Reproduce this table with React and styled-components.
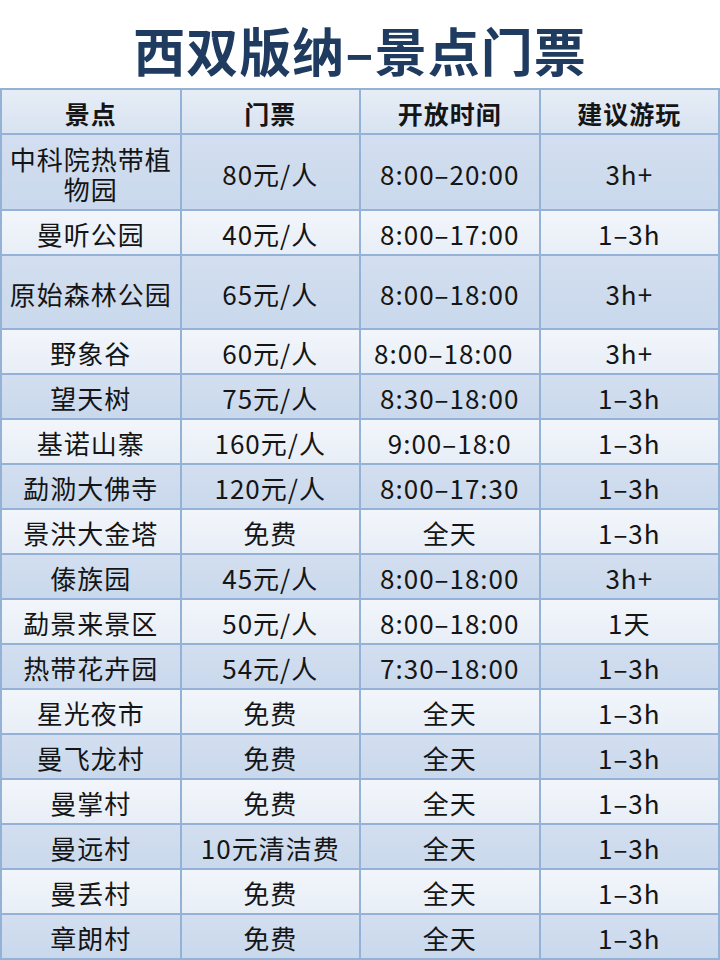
import React from 'react';
import styled, {createGlobalStyle} from 'styled-components';

const GlobalStyle = createGlobalStyle`
  html, body {
    margin: 0;
    padding: 0;
    background: #ffffff;
  }
  body {
    font-family: "Noto Sans CJK SC", "Noto Sans", sans-serif;
    color: #1a1a1a;
  }
`;

const Page = styled.div`
  width: 720px;
  height: 960px;
  overflow: hidden;
  display: flex;
  flex-direction: column;
`;

const Title = styled.h1`
  margin: 0;
  height: 90px;
  box-sizing: border-box;
  display: flex;
  align-items: center;
  justify-content: center;
  padding: 10px 0 0 0;
  font-size: 52px;
  font-weight: 700;
  color: #1f3b60;
  letter-spacing: 1px;
`;

const Table = styled.div`
  display: grid;
  grid-template-columns: repeat(4, 1fr);
  border-top: 2px solid #93b2d6;
  border-left: 2px solid #93b2d6;
`;

const Cell = styled.div`
  height: ${p => p.$h}px;
  box-sizing: border-box;
  display: flex;
  align-items: center;
  justify-content: center;
  text-align: center;
  padding: 4px 6px 0;
  border-right: 2px solid #93b2d6;
  border-bottom: 2px solid #93b2d6;
  background: ${p =>
    p.$head
      ? 'linear-gradient(180deg, #e6edf6 0%, #d8e3f1 100%)'
      : p.$dark
      ? 'linear-gradient(180deg, #d3dff0 0%, #c9d8ec 100%)'
      : 'linear-gradient(180deg, #f2f6fb 0%, #e8eef7 100%)'};
  font-size: ${p => (p.$head ? 25 : 26)}px;
  font-weight: ${p => (p.$head ? 700 : 400)};
  letter-spacing: 1px;
  line-height: 1.17;
  color: #151515;
  span {
    transform: translateX(${p => p.$shift || 0}px);
  }
`;

const headers = ['景点', '门票', '开放时间', '建议游玩'];

const rows = [
  ['中科院热带植物园', '80元/人', '8:00–20:00', '3h+', 76],
  ['曼听公园', '40元/人', '8:00–17:00', '1–3h', 45],
  ['原始森林公园', '65元/人', '8:00–18:00', '3h+', 74],
  ['野象谷', '60元/人', '8:00–18:00', '3h+', 45, -6],
  ['望天树', '75元/人', '8:30–18:00', '1–3h', 45],
  ['基诺山寨', '160元/人', '9:00–18:0', '1–3h', 45],
  ['勐泐大佛寺', '120元/人', '8:00–17:30', '1–3h', 45],
  ['景洪大金塔', '免费', '全天', '1–3h', 45],
  ['傣族园', '45元/人', '8:00–18:00', '3h+', 45],
  ['勐景来景区', '50元/人', '8:00–18:00', '1天', 45],
  ['热带花卉园', '54元/人', '7:30–18:00', '1–3h', 45],
  ['星光夜市', '免费', '全天', '1–3h', 45],
  ['曼飞龙村', '免费', '全天', '1–3h', 45],
  ['曼掌村', '免费', '全天', '1–3h', 45],
  ['曼远村', '10元清洁费', '全天', '1–3h', 45],
  ['曼丢村', '免费', '全天', '1–3h', 45],
  ['章朗村', '免费', '全天', '1–3h', 45],
];

const App = () => (
  <Page>
    <GlobalStyle/>
    <Title>西双版纳–景点门票</Title>
    <Table>
      {headers.map(h => (
        <Cell key={h} $head $h={45}><span>{h}</span></Cell>
      ))}
      {rows.map((r, i) => {
        const [name, price, time, dur, h, shift] = r;
        const dark = i % 2 === 0;
        return (
          <React.Fragment key={name}>
            <Cell $h={h} $dark={dark}><span>{name}</span></Cell>
            <Cell $h={h} $dark={dark}><span>{price}</span></Cell>
            <Cell $h={h} $dark={dark} $shift={shift}><span>{time}</span></Cell>
            <Cell $h={h} $dark={dark}><span>{dur}</span></Cell>
          </React.Fragment>
        );
      })}
    </Table>
  </Page>
);

export default App;
